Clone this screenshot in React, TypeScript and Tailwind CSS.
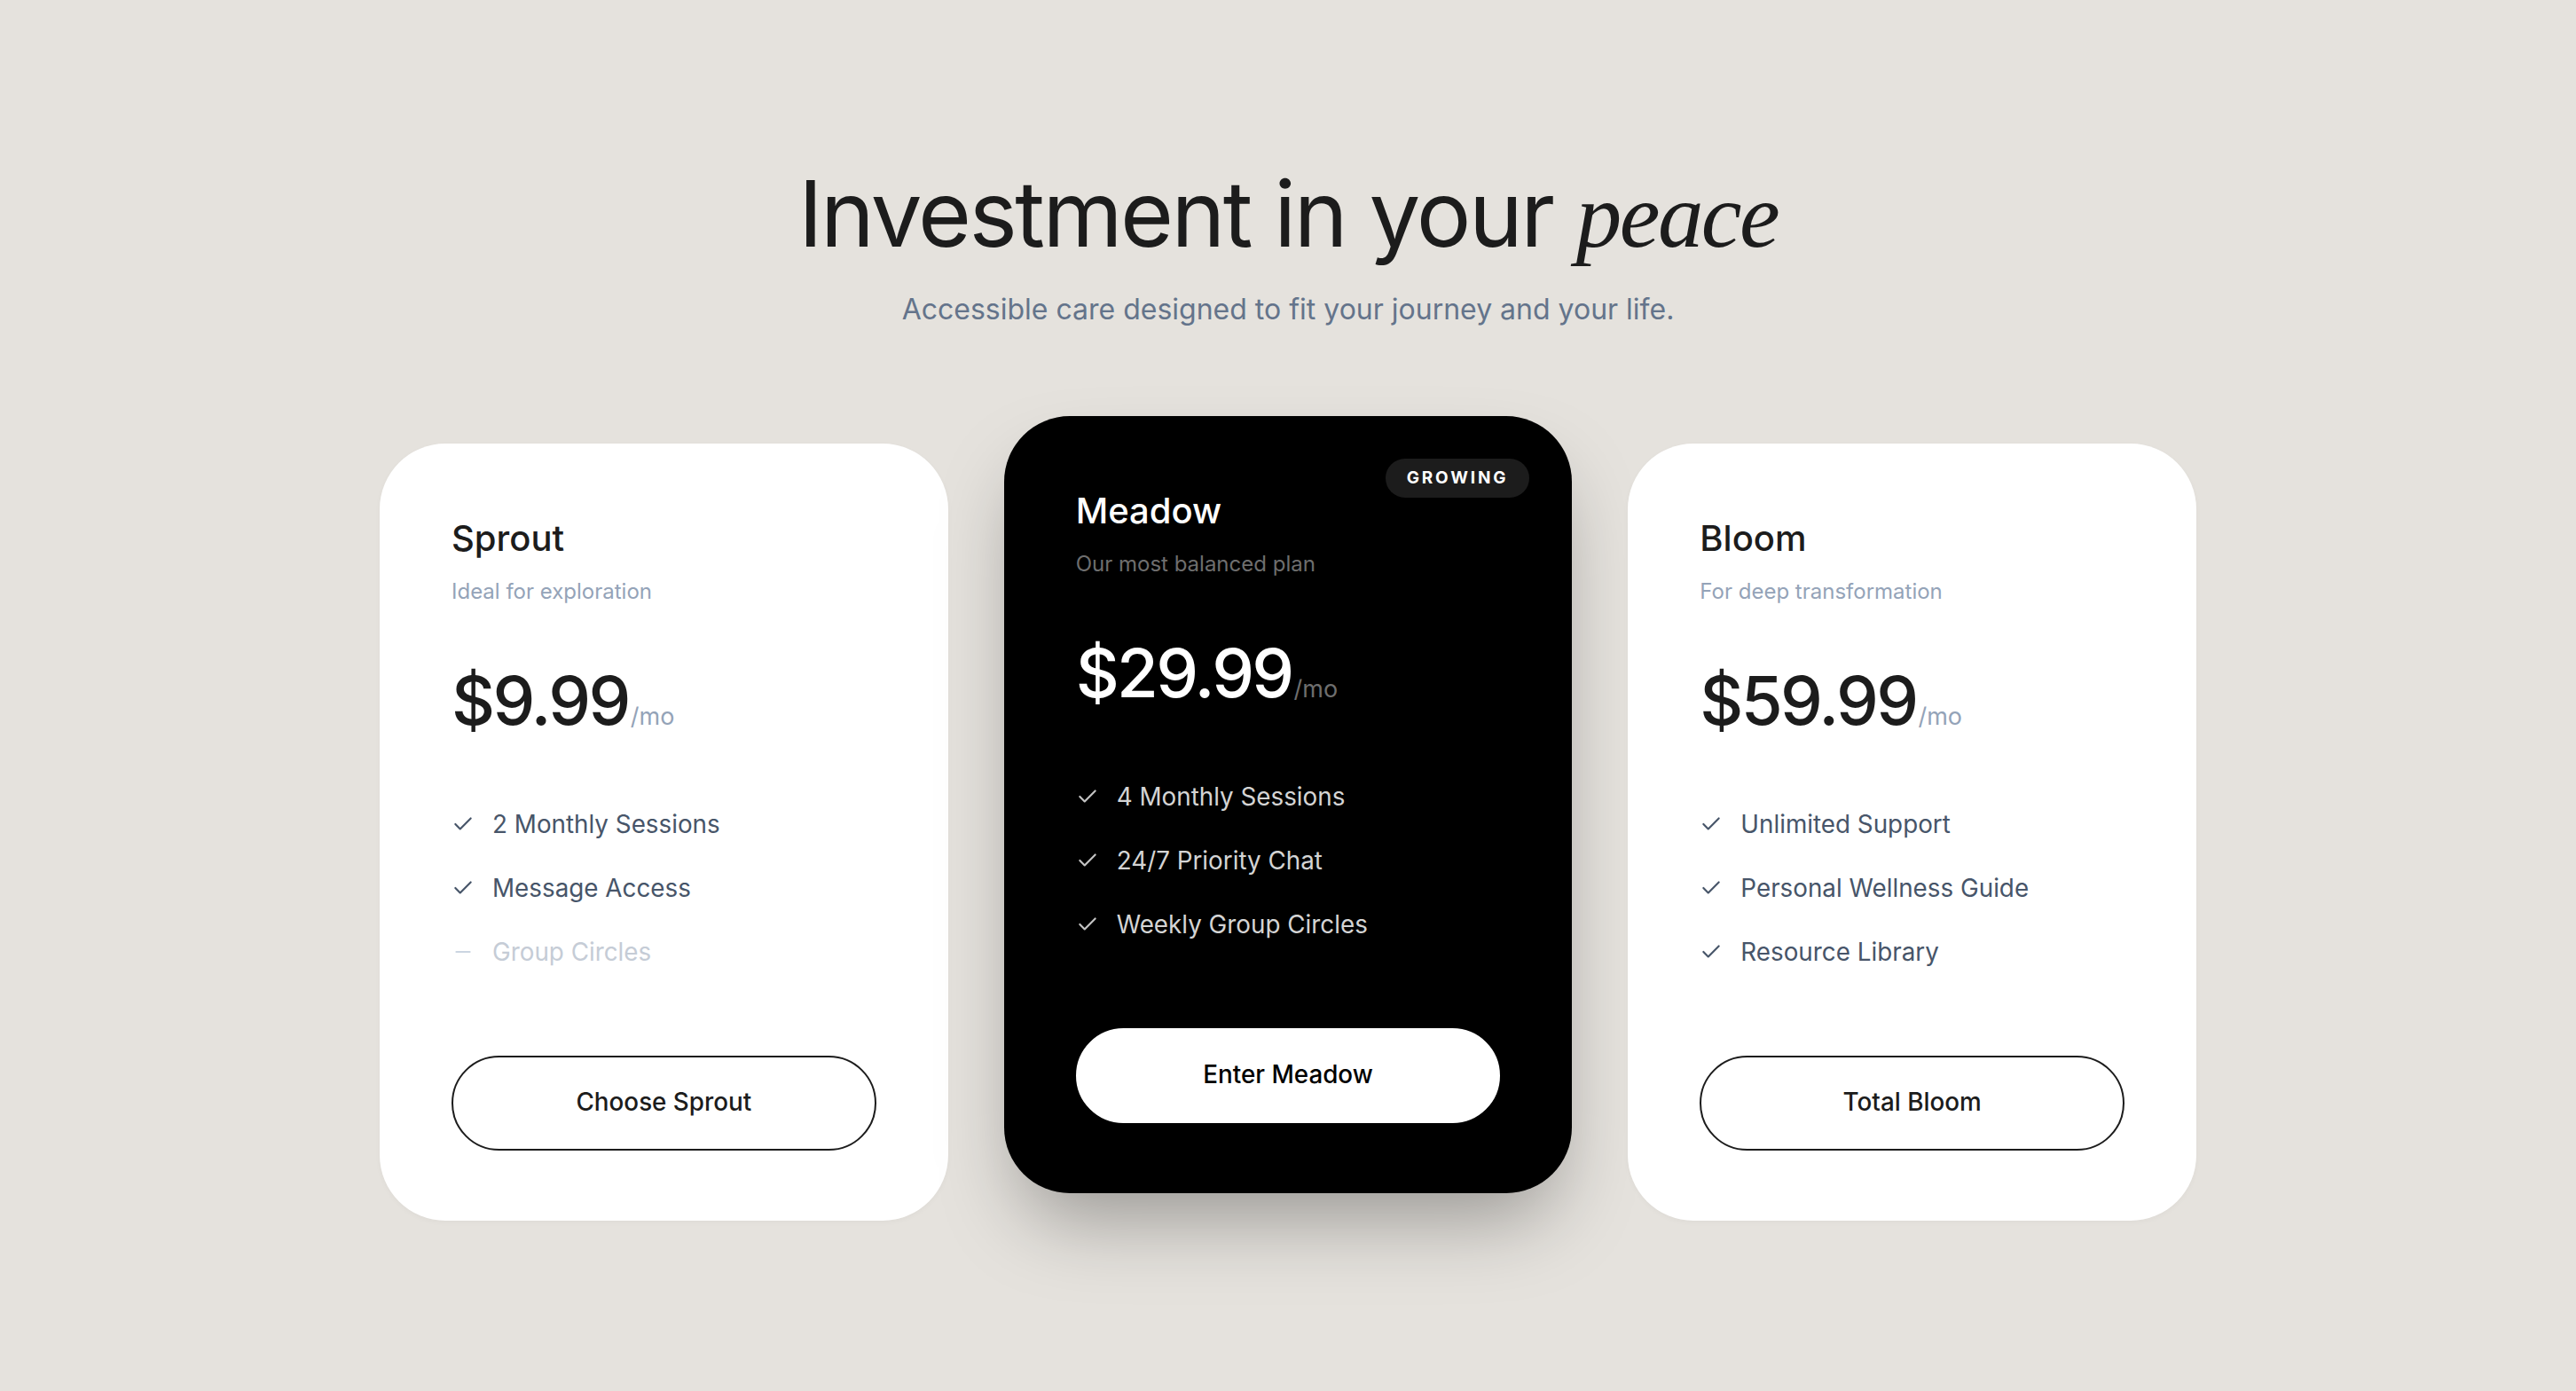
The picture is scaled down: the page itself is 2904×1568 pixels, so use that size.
import { Check, Minus } from 'lucide-react';
import { clsx } from 'clsx';

type Feature = { label: string; included: boolean };

type Plan = {
    name: string;
    tagline: string;
    price: string;
    features: Feature[];
    cta: string;
    featured?: boolean;
    badge?: string;
};

const PLANS: Plan[] = [
    {
        name: 'Sprout',
        tagline: 'Ideal for exploration',
        price: '$9.99',
        features: [
            { label: '2 Monthly Sessions', included: true },
            { label: 'Message Access', included: true },
            { label: 'Group Circles', included: false },
        ],
        cta: 'Choose Sprout',
    },
    {
        name: 'Meadow',
        tagline: 'Our most balanced plan',
        price: '$29.99',
        features: [
            { label: '4 Monthly Sessions', included: true },
            { label: '24/7 Priority Chat', included: true },
            { label: 'Weekly Group Circles', included: true },
        ],
        cta: 'Enter Meadow',
        featured: true,
        badge: 'Growing',
    },
    {
        name: 'Bloom',
        tagline: 'For deep transformation',
        price: '$59.99',
        features: [
            { label: 'Unlimited Support', included: true },
            { label: 'Personal Wellness Guide', included: true },
            { label: 'Resource Library', included: true },
        ],
        cta: 'Total Bloom',
    },
];

function PlanCard({ plan }: { plan: Plan }) {
    const dark = !!plan.featured;

    return (
        <div
            className={clsx(
                'relative rounded-[74px] px-[81px] pt-[83px] pb-[79px] flex flex-col',
                dark
                    ? 'bg-black -translate-y-[31px] shadow-[0_46px_90px_-20px_rgba(0,0,0,0.34)]'
                    : 'bg-white shadow-[0_2px_6px_rgba(0,0,0,0.03)]'
            )}
        >
            {plan.badge && (
                <span className="absolute top-[48px] right-[48px] h-[44px] px-[24px] flex items-center rounded-full bg-[#1c1c1c] text-white text-[19px] font-bold uppercase tracking-[0.15em]">
                    {plan.badge}
                </span>
            )}

            <h3 className={clsx('text-[40px] leading-[48px] font-medium', dark ? 'text-white' : 'text-[#1c1c1c]')}>
                {plan.name}
            </h3>
            <p className={clsx('mt-[18px] text-[24px] leading-[36px]', dark ? 'text-[#6e6e6e]' : 'text-[#94a3b8]')}>
                {plan.tagline}
            </p>

            {/* Price */}
            <div className="mt-[66px] flex items-baseline">
                <span className={clsx('text-[76px] leading-[76px] font-medium tracking-[-0.035em]', dark ? 'text-white' : 'text-[#1c1c1c]')}>
                    {plan.price}
                </span>
                <span className={clsx('ml-[2px] text-[27px]', dark ? 'text-[#6e6e6e]' : 'text-[#94a3b8]')}>/mo</span>
            </div>

            {/* Features */}
            <ul className="mt-[78px] flex flex-col gap-[28px]">
                {plan.features.map((f) => (
                    <li key={f.label} className="flex items-center gap-[20px] text-[27.8px] leading-[44px]">
                        {f.included ? (
                            <Check className={clsx('w-[26px] h-[26px] shrink-0', dark ? 'text-[#c4c4c4]' : 'text-[#475569]')} strokeWidth={2} />
                        ) : (
                            <Minus className="w-[26px] h-[26px] shrink-0 text-[#cbd5e1]" strokeWidth={2} />
                        )}
                        <span
                            className={clsx(
                                f.included ? (dark ? 'text-[#d4d4d4]' : 'text-[#475569]') : 'text-[#c5ccd6]'
                            )}
                        >
                            {f.label}
                        </span>
                    </li>
                ))}
            </ul>

            <button
                className={clsx(
                    'mt-[95px] h-[107px] w-full rounded-full text-[27.8px] font-medium border-2',
                    dark
                        ? 'bg-white border-white text-black'
                        : 'bg-transparent border-[#1c1c1c] text-[#1c1c1c]'
                )}
            >
                {plan.cta}
            </button>
        </div>
    );
}

export default function App() {
    return (
        <div className="min-h-screen bg-[#e5e2dd] font-['Inter',sans-serif] pt-[189px] pb-[160px]">
            <div className="text-center">
                <h1 className="text-[103px] leading-[103px] tracking-tight text-[#1c1c1c]">
                    Investment in your{' '}
                    <span className="font-['Liberation_Serif',serif] italic">peace</span>
                </h1>
                <p className="mt-[29px] text-[32px] leading-[50px] text-[#64748b]">
                    Accessible care designed to fit your journey and your life.
                </p>
            </div>

            <div className="mt-[126px] mx-auto max-w-[2136px] px-[44px] grid grid-cols-3 gap-[63px]">
                {PLANS.map((plan) => (
                    <PlanCard key={plan.name} plan={plan} />
                ))}
            </div>
        </div>
    );
}
